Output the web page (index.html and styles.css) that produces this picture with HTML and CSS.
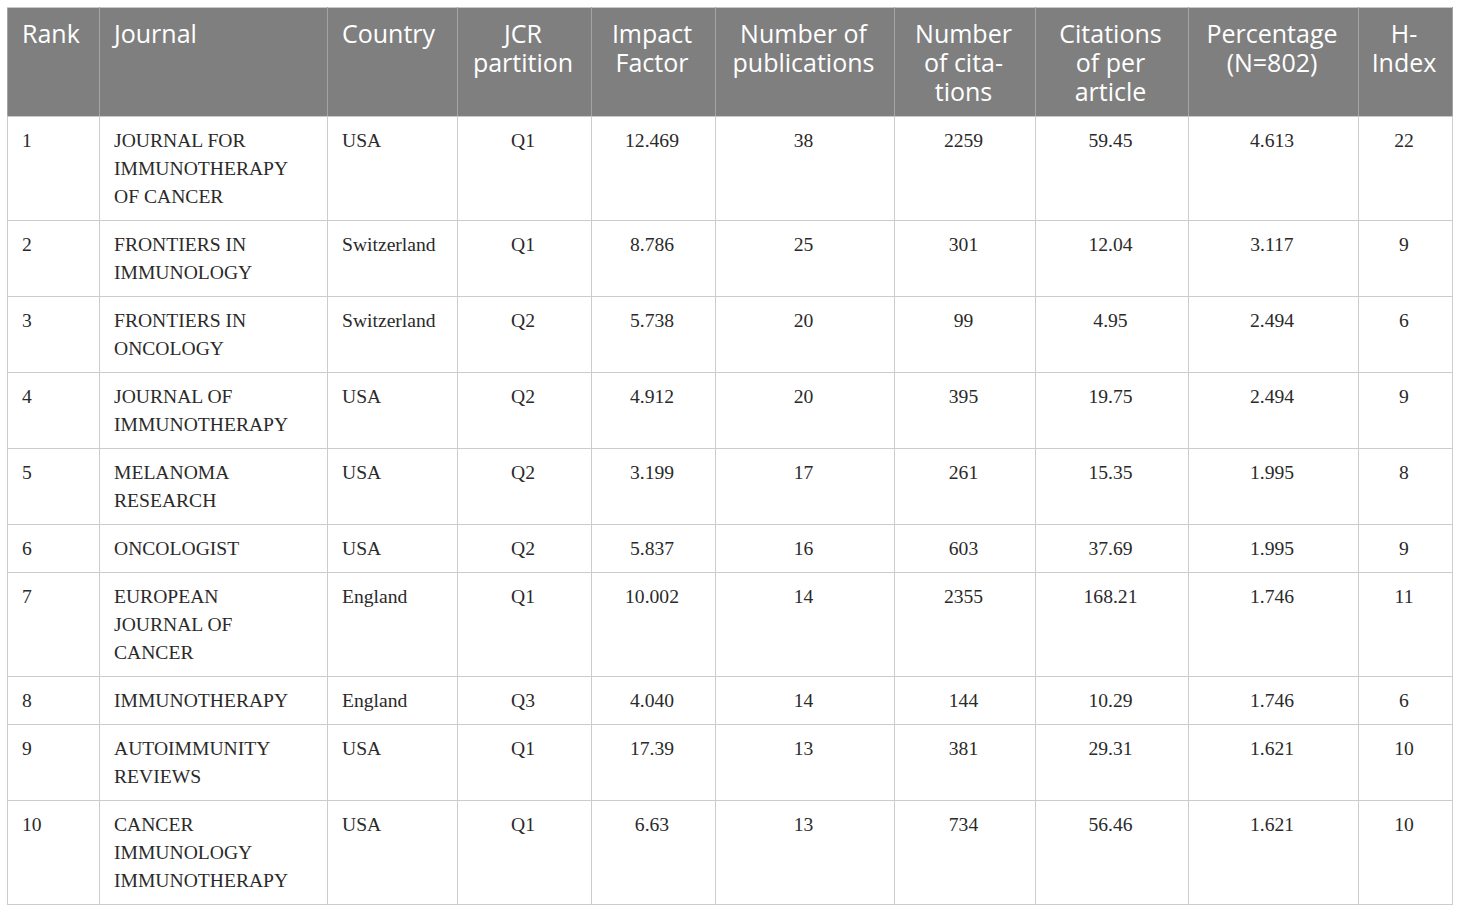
FILE: index.html
```html
<!DOCTYPE html>
<html lang="en">
<head>
<meta charset="utf-8">
<title>Top 10 journals</title>
<link rel="stylesheet" href="styles.css">
</head>
<body>
<table class="jtable">
  <colgroup>
    <col class="c-rank"><col class="c-journal"><col class="c-country"><col class="c-jcr"><col class="c-if"><col class="c-pub"><col class="c-cit"><col class="c-cpa"><col class="c-pct"><col class="c-h">
  </colgroup>
  <thead>
    <tr>
      <th class="left">Rank</th>
      <th class="left">Journal</th>
      <th class="left">Country</th>
      <th>JCR<br>partition</th>
      <th>Impact<br>Factor</th>
      <th>Number of<br>publications</th>
      <th>Number<br>of cita-<br>tions</th>
      <th>Citations<br>of per<br>article</th>
      <th>Percentage<br>(N=802)</th>
      <th>H-<br>Index</th>
    </tr>
  </thead>
  <tbody>
    <tr><td class="left">1</td><td class="left">JOURNAL FOR<br>IMMUNOTHERAPY<br>OF CANCER</td><td class="left">USA</td><td>Q1</td><td>12.469</td><td>38</td><td>2259</td><td>59.45</td><td>4.613</td><td>22</td></tr>
    <tr><td class="left">2</td><td class="left">FRONTIERS IN<br>IMMUNOLOGY</td><td class="left">Switzerland</td><td>Q1</td><td>8.786</td><td>25</td><td>301</td><td>12.04</td><td>3.117</td><td>9</td></tr>
    <tr><td class="left">3</td><td class="left">FRONTIERS IN<br>ONCOLOGY</td><td class="left">Switzerland</td><td>Q2</td><td>5.738</td><td>20</td><td>99</td><td>4.95</td><td>2.494</td><td>6</td></tr>
    <tr><td class="left">4</td><td class="left">JOURNAL OF<br>IMMUNOTHERAPY</td><td class="left">USA</td><td>Q2</td><td>4.912</td><td>20</td><td>395</td><td>19.75</td><td>2.494</td><td>9</td></tr>
    <tr><td class="left">5</td><td class="left">MELANOMA<br>RESEARCH</td><td class="left">USA</td><td>Q2</td><td>3.199</td><td>17</td><td>261</td><td>15.35</td><td>1.995</td><td>8</td></tr>
    <tr><td class="left">6</td><td class="left">ONCOLOGIST</td><td class="left">USA</td><td>Q2</td><td>5.837</td><td>16</td><td>603</td><td>37.69</td><td>1.995</td><td>9</td></tr>
    <tr><td class="left">7</td><td class="left">EUROPEAN<br>JOURNAL OF<br>CANCER</td><td class="left">England</td><td>Q1</td><td>10.002</td><td>14</td><td>2355</td><td>168.21</td><td>1.746</td><td>11</td></tr>
    <tr><td class="left">8</td><td class="left">IMMUNOTHERAPY</td><td class="left">England</td><td>Q3</td><td>4.040</td><td>14</td><td>144</td><td>10.29</td><td>1.746</td><td>6</td></tr>
    <tr><td class="left">9</td><td class="left">AUTOIMMUNITY<br>REVIEWS</td><td class="left">USA</td><td>Q1</td><td>17.39</td><td>13</td><td>381</td><td>29.31</td><td>1.621</td><td>10</td></tr>
    <tr><td class="left">10</td><td class="left">CANCER<br>IMMUNOLOGY<br>IMMUNOTHERAPY</td><td class="left">USA</td><td>Q1</td><td>6.63</td><td>13</td><td>734</td><td>56.46</td><td>1.621</td><td>10</td></tr>
  </tbody>
</table>
</body>
</html>
```

FILE: styles.css
```css
html, body {
  margin: 0;
  padding: 0;
  background: #ffffff;
}

body {
  padding: 7px 0 0 7px;
}

.jtable {
  border-collapse: collapse;
  table-layout: fixed;
  width: 1446px;
  border: 1px solid #c9c9c9;
}

.c-rank { width: 92px; }
.c-journal { width: 228px; }
.c-country { width: 130px; }
.c-jcr { width: 134px; }
.c-if { width: 124px; }
.c-pub { width: 179px; }
.c-cit { width: 141px; }
.c-cpa { width: 153px; }
.c-pct { width: 170px; }
.c-h { width: 94px; }

.jtable th {
  background: #7f7f7f;
  color: #ffffff;
  font-family: "Open Sans", "Noto Sans", sans-serif;
  font-weight: 400;
  font-size: 25px;
  line-height: 29px;
  padding: 11px 8px 10px 5px;
  text-align: center;
  vertical-align: top;
  border: 1px solid #a3a3a3;
  border-top-color: #c9c9c9;
  border-bottom-color: #c9c9c9;
}

.jtable td {
  font-family: "Liberation Serif", "Times New Roman", serif;
  font-size: 19.6px;
  line-height: 28px;
  color: #2a2a2a;
  padding: 10px 8px 9px 5px;
  text-align: center;
  vertical-align: top;
  border: 1px solid #cccccc;
}

.jtable th.left,
.jtable td.left {
  text-align: left;
  padding-left: 14px;
  padding-right: 6px;
}
```
